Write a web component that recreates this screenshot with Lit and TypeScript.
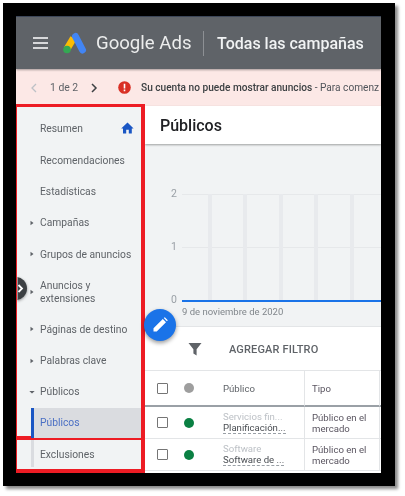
import { LitElement, html, css, svg } from "lit";
import { customElement } from "lit/decorators.js";

const NAV_TOP = [
  { t: "Resumen", home: true },
  { t: "Recomendaciones" },
  { t: "Estadísticas" },
  { t: "Campañas", arrow: "r" },
  { t: "Grupos de anuncios", arrow: "r" },
  { t: "Anuncios y extensiones", arrow: "r", tall: true },
  { t: "Páginas de destino", arrow: "r" },
  { t: "Palabras clave", arrow: "r" },
  { t: "Públicos", arrow: "d" },
];

const ROWS = [
  { cat: "Servicios fin...", name: "Planificación..." },
  { cat: "Software", name: "Software de ..." },
];

@customElement("app-root")
export class AppRoot extends LitElement {
  static styles = css`
    :host { display: block; width: 405px; height: 496px; background: #fff; padding: 3px 0 0 3px; box-sizing: border-box; font-family: Roboto, "Liberation Sans", sans-serif; overflow: hidden; }
    .frame { width: 392px; height: 483px; background: #000; padding: 13px 14px 13px 13px; box-sizing: border-box; box-shadow: 3px 3px 3px #8a8a8a; }
    .screen { position: relative; width: 365px; height: 457px; overflow: hidden; background: #fff; display: flex; flex-direction: column; filter: blur(0.4px); }
    .header { height: 53px; flex: none; background: #5f6368; border-top: 1px solid #3c4658; box-sizing: border-box; display: flex; align-items: center; padding-left: 17px; box-shadow: 0 1px 2px rgba(0,0,0,.35); position: relative; z-index: 2; color: #fff; }
    .menu { width: 15px; height: 12px; flex: none; margin-right: 15px; }
    .logo { width: 24px; height: 23px; flex: none; margin-right: 9px; }
    .brand { font-size: 18.6px; color: #eceded; width: 107px; flex: none; }
    .vr { width: 1px; height: 25px; background: #8d9094; flex: none; margin-right: 13px; }
    .crumb { font-size: 16px; font-weight: 500; color: #f1f3f4; white-space: nowrap; }
    .banner { height: 37px; flex: none; background: #fce8e6; display: flex; align-items: center; color: #5f6368; font-size: 10.4px; white-space: nowrap; overflow: hidden; }
    .ch { width: 8px; height: 10px; flex: none; }
    .back { margin: 0 12px 0 14px; }
    .pg { margin-right: 9px; width: 31px; flex: none; }
    .alert { width: 13px; height: 13px; flex: none; margin: 0 10px 0 20px; }
    .msg { font-size: 10.15px; color: #50545a; }
    .msg b { font-weight: 500; color: #3c4043; }
    .body { flex: 1; display: flex; min-height: 0; }
    .side { width: 129px; flex: none; display: flex; flex-direction: column; margin-top: -2px; position: relative; z-index: 3; }
    .box { box-sizing: border-box; background: #f1f3f4; border: 0 solid #ed1c24; border-width: 3px 4px 4px 1.5px; }
    .box.a { height: 336px; padding-top: 6px; }
    .box.b { flex: 1; border-top-width: 0; border-bottom-width: 4px; }
    .row { height: 31.4px; display: flex; align-items: center; position: relative; padding-left: 23px; font-size: 10.3px; line-height: 13px; color: #5f6368; box-sizing: border-box; }
    .row.tall { height: 43.5px; }
    .arrow { position: absolute; left: 12px; top: 50%; margin-top: -3px; width: 6px; height: 6px; }
    .home { position: absolute; right: 7px; top: 8.5px; width: 13px; height: 12px; }
    .sub { margin-left: 14px; padding-left: 6px; border-left: 3px solid #dadce0; }
    .sub.on { height: 30px; background: #dadce0; border-left-color: #1a56c4; color: #4a6fc4; }
    .sub.ex { height: 27px; padding-top: 1.5px; }
    .main { flex: 1; display: flex; flex-direction: column; min-width: 0; }
    .title { height: 38px; margin: 0; flex: none; display: flex; align-items: center; padding-left: 15px; font-size: 16px; font-weight: 500; color: #202124; box-shadow: 0 1px 2px rgba(0,0,0,.35); position: relative; }
    .chart { height: 183px; flex: none; background: #f1f3f4; border-bottom: 1px solid #e3e5e7; box-sizing: border-box; padding: 49.5px 0 0 26px; display: flex; flex-direction: column; }
    .plot { position: relative; height: 106px; flex: none; margin-left: 11px; display: flex; flex-direction: column; justify-content: space-between; border-bottom: 2px solid #1a73e8; }
    .gl { height: 1px; background: #e6e8ea; }
    .bars { position: absolute; inset: 0 0 0 26px; display: flex; gap: 31.4px; }
    .bars i { width: 4px; background: #e8eaed; display: block; }
    .yl { position: absolute; left: -11px; font-size: 10.5px; color: #9aa0a6; transform: translateY(-50%); line-height: 12px; }
    .date { font-size: 9.5px; color: #80868b; margin: 4px 0 0 11px; white-space: nowrap; }
    .filter { height: 44px; flex: none; display: flex; align-items: center; padding: 1px 0 0 43px; box-sizing: border-box; font-size: 11px; font-weight: 500; color: #5f6368; letter-spacing: .15px; border-bottom: 1px solid #e3e5e7; }
    .filter svg { width: 14px; height: 14px; margin-right: 27px; flex: none; }
    .table { display: grid; grid-template-columns: 64px 95px 75px 2px; }
    .c { display: flex; align-items: center; box-sizing: border-box; font-size: 9.6px; color: #5f6368; line-height: 11px; border-bottom: 1px solid #e3e5e7; }
    .c.head { height: 36px; border-bottom: 2px solid #9aa0a6; }
    .c.sel { padding-left: 12px; gap: 16px; }
    .c.r { height: 32.2px; }
    .c.n { flex-direction: column; align-items: flex-start; justify-content: center; padding-left: 14px; white-space: nowrap; }
    .c.t { padding-left: 7px; color: #5a5560; border-left: 1px solid #e3e5e7; }
    .c.nm { padding-left: 14px; }
    .cat { color: #bdc1c6; }
    .name { color: #4a4e53; border-bottom: 1px dashed #9aa0a6; line-height: 11px; }
    .cb { width: 9px; height: 9px; border: 1.5px solid #757575; border-radius: 1px; flex: none; }
    .dot { width: 10px; height: 10px; border-radius: 50%; background: #0a8043; flex: none; }
    .dot.grey { background: #9e9e9e; }
    .end { border-left: 1px solid #e3e5e7; }
    .fab { position: absolute; left: 128px; top: 293px; width: 32px; height: 32px; border-radius: 50%; background: #1a73e8; box-shadow: 0 2px 4px rgba(0,0,0,.4); z-index: 5; display: flex; align-items: center; justify-content: center; }
    .fab svg { width: 16px; height: 16px; }
    .toggle { position: absolute; left: -12px; top: 260.5px; width: 23px; height: 23px; border-radius: 50%; background: #3c4043; box-shadow: 0 1px 3px rgba(0,0,0,.4); clip-path: inset(-5px -5px -5px 13.5px); z-index: 5; display: flex; align-items: center; justify-content: flex-end; padding-right: 3px; box-sizing: border-box; }
    .toggle svg { width: 7px; height: 9px; }
  `;

  private arrow(dir: string) {
    return html`<svg class="arrow" viewBox="0 0 6 6">${dir === "r"
      ? svg`<path d="M1.5 .8 4.5 3 1.5 5.2z" fill="#5f6368"/>`
      : svg`<path d="M.3 2 5.7 2 3 4.6z" fill="#5f6368"/>`}</svg>`;
  }

  render() {
    return html`<div class="frame"><div class="screen">
      <header class="header">
        <svg class="menu" viewBox="0 0 15 12"><path d="M0 1h15M0 6h15M0 11h15" stroke="#fff" stroke-width="1.5"/></svg>
        <svg class="logo" viewBox="0 0 24 23">
          <path d="M10.5 6 4 17" stroke="#fbbc04" stroke-width="7"/>
          <path d="M12.5 4.5 19.5 18" stroke="#4285f4" stroke-width="7" stroke-linecap="round"/>
          <circle cx="4" cy="17.5" r="3.8" fill="#34a853"/>
        </svg>
        <span class="brand">Google Ads</span>
        <span class="vr"></span>
        <span class="crumb">Todas las campañas</span>
      </header>
      <div class="banner">
        <svg class="ch back" viewBox="0 0 8 10"><path d="M6 1 2 5l4 4" fill="none" stroke="#bdc1c6" stroke-width="1.3"/></svg>
        <span class="pg">1 de 2</span>
        <svg class="ch" viewBox="0 0 8 10"><path d="M2 1l4 4-4 4" fill="none" stroke="#3c4043" stroke-width="1.5"/></svg>
        <svg class="alert" viewBox="0 0 13 13"><circle cx="6.5" cy="6.5" r="6.3" fill="#d93025"/><path d="M5.7 2.8h1.6v4.6H5.7zM5.7 8.6h1.6v1.6H5.7z" fill="#fff"/></svg>
        <span class="msg"><b>Su cuenta no puede mostrar anuncios</b> - Para comenz</span>
      </div>
      <div class="body">
        <nav class="side">
          <div class="box a">
            ${NAV_TOP.map(n => html`<div class="row ${n.tall ? "tall" : ""}">
              ${n.arrow ? this.arrow(n.arrow) : ""}<span>${n.t}</span>
              ${n.home ? html`<svg class="home" viewBox="0 0 13 12"><path d="M5.2 11.5V7.8h2.6v3.7h3V6.5h1.8L6.5.5 .2 6.5H2v5z" fill="#1a56c4"/></svg>` : ""}
            </div>`)}
            <div class="row sub on">Públicos</div>
          </div>
          <div class="box b"><div class="row sub ex">Exclusiones</div></div>
        </nav>
        <section class="main">
          <h1 class="title">Públicos</h1>
          <div class="chart">
            <div class="plot">
              <div class="bars"><i></i><i></i><i></i><i></i><i></i></div>
              <div class="gl"></div><div class="gl"></div><div></div>
              <span class="yl" style="top:0">2</span>
              <span class="yl" style="top:53px">1</span>
              <span class="yl" style="top:106px">0</span>
            </div>
            <div class="date">9 de noviembre de 2020</div>
          </div>
          <div class="filter">
            <svg viewBox="0 0 14 14"><path d="M.5 1h13L8.6 7.2V13.5L5.4 11.5V7.2z" fill="#5f6368"/></svg>
            AGREGAR FILTRO
          </div>
          <div class="table">
            <div class="c head sel"><span class="cb"></span><span class="dot grey"></span></div>
            <div class="c head nm">Público</div>
            <div class="c head t">Tipo</div>
            <div class="c head end"></div>
            ${ROWS.map(r => html`
              <div class="c r sel"><span class="cb"></span><span class="dot"></span></div>
              <div class="c r n"><span class="cat">${r.cat}</span><span class="name">${r.name}</span></div>
              <div class="c r t"><span>Público en el<br />mercado</span></div>
              <div class="c r end"></div>
            `)}
          </div>
        </section>
      </div>
      <div class="fab"><svg viewBox="0 0 16 16"><path d="M1.5 14.5v-3.2L10.8 2l3.2 3.2-9.3 9.3zM11.8 1l1-.8 3 3-.9 1z" fill="#fff"/></svg></div>
      <div class="toggle"><svg viewBox="0 0 7 9"><path d="M1.5 1 5 4.5 1.5 8" fill="none" stroke="#fff" stroke-width="1.8"/></svg></div>
    </div></div>`;
  }
}
